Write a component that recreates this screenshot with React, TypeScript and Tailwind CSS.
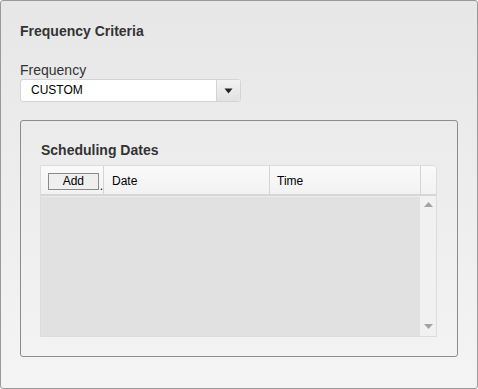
import React from "react";

export default function App() {
  return (
    <div className="w-[478px] h-[389px] bg-white" style={{ fontFamily: '"Liberation Sans", Arial, sans-serif' }}>
      <div className="w-[478px] h-[389px] border border-[#999] rounded-[3px] bg-gradient-to-b from-[#e7e7e7] to-[#f4f4f4] px-[19px] pt-[22px] flex flex-col">
        <div className="text-[14px] leading-[16px] font-bold text-[#333]">Frequency Criteria</div>
        <div className="mt-[23px] text-[14px] leading-[16px] text-[#333]">Frequency</div>
        <div className="mt-[1px] w-[221px] h-[23px] flex border border-[#d4d4d4] rounded-[3px] bg-white overflow-hidden">
          <div className="flex-1 pl-[10px] text-[12px] leading-[21px] text-black">CUSTOM</div>
          <div className="w-[24px] h-full border-l border-[#d4d4d4] bg-gradient-to-b from-[#f2f2f2] to-[#e2e2e2] flex items-center justify-center">
            <svg width="9" height="6" viewBox="0 0 9 6"><path d="M0.5 0.5 L8.5 0.5 L4.5 5.5 Z" fill="#222" /></svg>
          </div>
        </div>
        <div className="mt-[18px] w-[438px] h-[237px] border border-[#8c8c8c] rounded-[3px] pl-[19px] pr-[19px] pt-[21px] flex flex-col">
          <div className="text-[14px] leading-[16px] font-bold text-[#333] pl-[1px]">Scheduling Dates</div>
          <div className="mt-[7px] w-[397px] h-[172px] flex flex-col border border-[#dcdcdc] rounded-tr-[4px] overflow-hidden">
            <div className="h-[30px] flex bg-gradient-to-b from-[#fafafa] to-[#f2f2f2] border-b-2 border-[#d6d6d6] text-[12px] text-black">
              <div className="w-[63px] border-r border-[#d4d4d4] flex items-center pl-[7px]">
                <div className="w-[51px] h-[17px] border border-[#8a8a8a] bg-[#efefef] flex items-center justify-center text-[12px] leading-[15px] mt-[2px]">Add</div>
                <span className="text-[12px] leading-none mt-[12px] ml-[1px]">.</span>
              </div>
              <div className="w-[166px] border-r border-[#d4d4d4] flex items-center pl-[8px] pt-[2px]">Date</div>
              <div className="w-[151px] border-r border-[#d4d4d4] flex items-center pl-[7px] pt-[2px]">Time</div>
              <div className="flex-1" />
            </div>
            <div className="flex-1 flex">
              <div className="flex-1 bg-[#e1e1e1] border-t border-[#ececec]" />
              <div className="w-[16px] bg-[#f1f1f1] flex flex-col items-center justify-between pt-[6px] pb-[7px]">
                <svg width="9" height="5" viewBox="0 0 9 5"><path d="M0 5 L9 5 L4.5 0 Z" fill="#a3a3a3" /></svg>
                <svg width="9" height="5" viewBox="0 0 9 5"><path d="M0 0 L9 0 L4.5 5 Z" fill="#a3a3a3" /></svg>
              </div>
            </div>
          </div>
        </div>
      </div>
    </div>
  );
}
